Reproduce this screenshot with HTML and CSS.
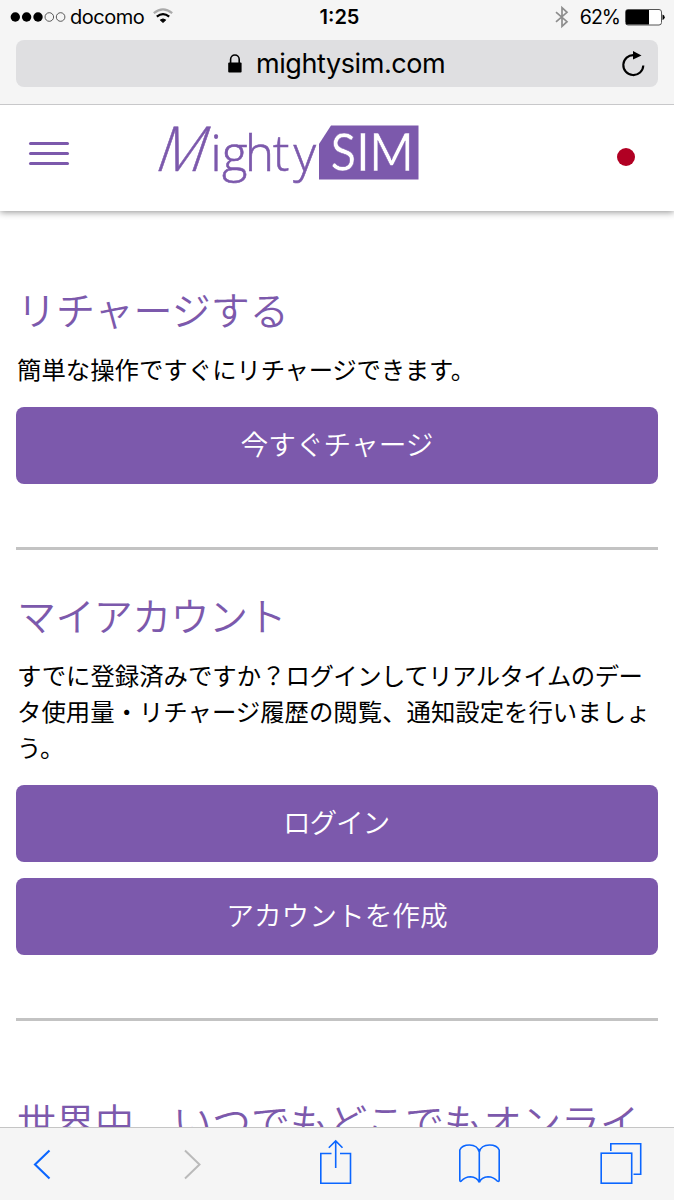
FILE: index.html
```html
<!DOCTYPE html>
<html lang="ja">
<head>
<meta charset="utf-8">
<title>Mighty SIM</title>
<link rel="stylesheet" href="styles.css">
</head>
<body>
<div class="phone">
  <div class="browser-top">
    <div class="status">
      <div class="status-left">
        <svg class="signal" width="56" height="12" viewBox="0 0 56 12"><circle cx="5.3" cy="6" r="4.7"/><circle cx="16.6" cy="6" r="4.7"/><circle cx="28" cy="6" r="4.7"/><g fill="none" stroke="#333" stroke-width=".8"><circle cx="39.3" cy="6" r="4.3"/><circle cx="50.6" cy="6" r="4.3"/></g></svg>
        <span class="carrier">docomo</span>
        <svg class="wifi" width="20" height="16" viewBox="0 0 20 16" fill="none" stroke-width="2.2"><path d="M.8 5.2Q10-2.4 19.2 5.2" stroke="#aaa"/><path d="M3.8 8.7Q10 3.4 16.2 8.7" stroke="#000"/><path d="M7.3 11.9Q10 10 12.7 11.9L10 14.6Z" fill="#000" stroke="#000" stroke-width="1"/></svg>
      </div>
      <span class="time">1:25</span>
      <div class="status-right">
        <svg class="bluetooth" width="14" height="22" viewBox="0 0 14 22" fill="none" stroke="#8d8d8d" stroke-width="1.7"><path d="M1 6.2 12 15.7 7 20.3V1.7L12 6.3 1 15.8"/></svg>
        <span class="percent">62%</span>
        <svg class="battery" width="40" height="17" viewBox="0 0 40 17"><rect x=".5" y=".5" width="36" height="15.5" rx="2.5" fill="#fff" stroke="#555"/><path d="M2 1h22v14.5H2q-1 0-1-1V2q0-1 1-1Z"/><path d="M37.5 5.5q2.2.6 2.2 2.8t-2.2 2.8Z"/></svg>
      </div>
    </div>
    <div class="address">
      <svg class="lock" width="14" height="19" viewBox="0 0 14 19"><path d="M2.6 9V5.3a4.3 4.3 0 0 1 8.6 0V9" fill="none" stroke="#000" stroke-width="1.6"/><rect x=".2" y="8.5" width="13.4" height="10" rx="1"/></svg>
      <span class="domain">mightysim.com</span>
      <svg class="reload" width="24" height="26" viewBox="0 0 24 26"><path d="M22.3 14.5A10 10 0 1 1 12.9 4.1" fill="none" stroke="#000" stroke-width="2.1"/><path d="M12 0 20.5 4.5 12 8.6Z"/></svg>
    </div>
  </div>

  <header class="site-header">
    <div class="menu"><i></i><i></i><i></i></div>
    <svg class="logo" width="262" height="70" viewBox="0 0 262 70">
      <g class="wordmark">
        <text transform="translate(-5 48) skewX(-19)" font-size="62" textLength="48" lengthAdjust="spacingAndGlyphs">M</text>
        <text y="48" x="52.5 64 87 115 135.5" font-size="49">ighty</text>
      </g>
      <path d="M161 21 173 2.5H260.5V56.5H161Z" fill="#7c59ac"/>
      <text class="sim" x="172.5" y="48" font-size="53" textLength="83" lengthAdjust="spacingAndGlyphs">SIM</text>
    </svg>
    <div class="flag"></div>
  </header>

  <main>
    <section>
      <h2>リチャージする</h2>
      <p>簡単な操作ですぐに<span class="tight">リチャージできます。</span></p>
      <a class="button">今すぐチャージ</a>
    </section>
    <section>
      <h2 class="account">マイアカウント</h2>
      <p>すでに登録済みですか？<span class="tight">ログインしてリアルタイムのデー</span><br>タ使用量・リチャージ履歴の閲覧、通知設定を行いましょ<br>う。</p>
      <a class="button login">ログイン</a>
      <a class="button">アカウントを作成</a>
    </section>
    <section class="last">
      <h2>世界中、いつでもどこでもオンライ</h2>
    </section>
  </main>

  <nav class="toolbar">
    <svg width="674" height="72" viewBox="0 0 674 72" fill="none" stroke="#0b66ff" stroke-width="1.6">
      <path d="M49.5 22.5 35 36.5 49.5 50.5" stroke-width="2.1"/>
      <path d="M185 22.5 199.5 36.5 185 50.5" stroke="#bababa" stroke-width="2"/>
      <path d="M331.5 25.5H320.8V55.2H350.5V25.5H340M335.7 40V13M328.8 19.8 335.7 13 342.5 19.8"/>
      <path d="M479.3 54.5V22M479.3 54.5Q477 49 470.5 48.8 465 49 461.5 52.8 459.8 54.3 459.8 52V22Q462 17 469.5 17 477.5 17 479.3 24 481 17 489.5 17 497 17 499.2 22V52Q499.2 54.3 497 52.8 493.5 49 488 48.8 481.5 49 479.3 54.5"/>
      <rect x="601.2" y="25.2" width="30.5" height="30"/><path d="M610.8 23V15.7H640.7V46.3H633.5"/>
    </svg>
  </nav>
</div>
</body>
</html>
```
FILE: styles.css
```css
* { box-sizing: border-box; }
body { margin: 0; background: #fff; }
.phone {
  width: 674px; height: 1200px; overflow: hidden;
  display: flex; flex-direction: column;
  font-family: Inter, "Noto Sans CJK JP", sans-serif; color: #000;
}
svg { display: block; flex: none; overflow: visible; }
.browser-top { position: relative; z-index: 1; flex: none; height: 105px; background: #f5f5f5; border-bottom: 1px solid #c8c8ca; padding: 0 16px; }
.status { height: 40px; margin: 0 -6px; display: grid; grid-template-columns: 1fr auto 1fr; padding: 5px 0 0; }
.status-left, .status-right { display: flex; align-items: center; height: 24px; }
.status-left { gap: 4px; }
.carrier { font-size: 20px; letter-spacing: -.5px; }
.wifi { margin-left: 5px; margin-top: -2px; }
.time { font-size: 20px; font-weight: 600; line-height: 24px; margin-left: 5px; }
.status-right { justify-content: flex-end; }
.bluetooth { margin-right: 11px; }
.percent { font-size: 19.5px; letter-spacing: -1px; margin-right: 5px; }
.battery { margin-right: -1px; }
.address { height: 47px; border-radius: 8px; background: #dfdfe1; display: flex; align-items: center; padding: 0 13px 0 212px; }
.domain { font-size: 27px; margin-left: 14px; letter-spacing: -.42px; }
.reload { margin-left: auto; }
.site-header { flex: none; height: 106px; background: #fff; box-shadow: 0 1px 7px rgba(0,0,0,.45); display: flex; padding: 18px 39px 0 29px; }
.menu { width: 40px; display: flex; flex-direction: column; gap: 7px; padding-top: 19px; }
.menu i { height: 3px; border-radius: 2px; background: #7c59ac; }
.logo { margin-left: 89px; }
.wordmark { font-family: "Open Sans", sans-serif; font-weight: 300; fill: #7c59ac; stroke: #7c59ac; stroke-width: .6; }
.sim { font-family: Lato, sans-serif; font-weight: 400; fill: #fff; stroke: #7c59ac; stroke-width: .5; }
.flag { width: 18px; height: 18px; border-radius: 50%; background: #b10023; margin: 25px 0 0 auto; }
main { flex: 1; min-height: 0; overflow: hidden; padding: 0 16px; font-family: "Noto Sans CJK JP", sans-serif; }
section { border-bottom: 3px solid #c3c3c3; padding-bottom: 63px; padding-top: 34px; }
section:first-child { padding-top: 67px; }
h2 { margin: 0; padding-left: 1px; font-size: 39px; line-height: 60px; font-weight: 350; color: #7c59ac; white-space: nowrap; }
.account { letter-spacing: -.6px; }
p { margin: 13px 0 20px; padding-left: 1px; font-size: 24.4px; font-weight: 400; line-height: 36px; white-space: nowrap; }
.tight { letter-spacing: -.5px; }
section:first-child .tight { letter-spacing: -.25px; }
.button { display: block; height: 77px; line-height: 72px; border-radius: 8px; background: #7c59ac; color: #fff; text-align: center; font-size: 27.7px; font-weight: 350; }
.login { letter-spacing: -1.2px; padding-right: 2px; }
.button + .button { margin-top: 16px; }
section.last { padding-top: 69px; border: 0; }
.toolbar { position: relative; flex: none; height: 73px; background: #f5f5f5; border-top: 1px solid #c5c5c5; }
```
